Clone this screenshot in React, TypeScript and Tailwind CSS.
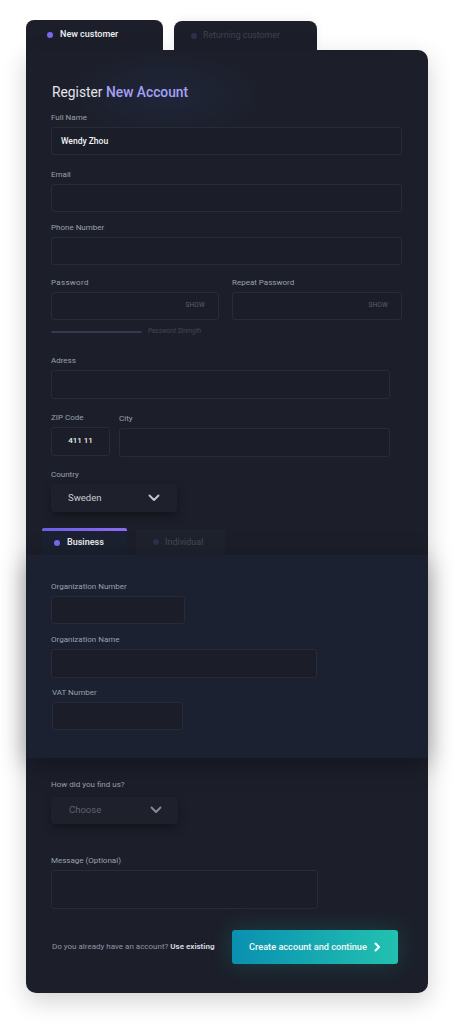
import React from "react";

const font = { fontFamily: "Roboto, 'Noto Sans', sans-serif" };

function Label({ children, className = "" }: { children: React.ReactNode; className?: string }) {
  return <div className={`h-[10px] leading-[10px] text-[8px] text-[#9aa0ad] mb-[4px] ${className}`}>{children}</div>;
}

function Input({ className = "", children }: { className?: string; children?: React.ReactNode }) {
  return (
    <div className={`h-[28px] rounded-[3px] border border-[#282c38] bg-[#1b1e28] flex items-center ${className}`}>
      {children}
    </div>
  );
}

function Chevron({ color }: { color: string }) {
  return (
    <svg width="12" height="8" viewBox="0 0 12 8" fill="none">
      <polyline points="1.5,1.5 6,6 10.5,1.5" stroke={color} strokeWidth="1.8" strokeLinecap="round" strokeLinejoin="round" />
    </svg>
  );
}

export default function App() {
  return (
    <div className="min-h-screen w-[454px] bg-white pt-[20px] pl-[26px]" style={font}>
      {/* top tabs */}
      <div className="flex items-end">
        <div className="w-[137px] h-[30px] rounded-t-[8px] bg-[#1c1f2a] flex items-center pl-[21px]">
          <span className="w-[6px] h-[6px] rounded-full bg-[#7b68ee] mr-[7px]" />
          <span className="text-[9px] font-medium text-[#f0f1f4]">New customer</span>
        </div>
        <div className="ml-[11px] w-[143px] h-[29px] rounded-t-[8px] bg-[#1c1f2a] flex items-center pl-[17px] shadow-[0_-2px_8px_rgba(0,0,0,0.06)]">
          <span className="w-[6px] h-[6px] rounded-full bg-[#342e4f] mr-[6px]" />
          <span className="text-[8.8px] text-[#3e4253]">Returning customer</span>
        </div>
      </div>

      {/* card */}
      <div className="relative w-[402px] rounded-b-[10px] rounded-tr-[10px] bg-[#1c1f2a] shadow-[0_8px_24px_rgba(0,0,0,0.18)]">
        <div className="absolute left-[40px] top-[0px] w-[200px] h-[90px] rounded-full bg-[radial-gradient(closest-side,rgba(40,55,100,0.28),rgba(40,55,100,0))] pointer-events-none" />
        <div className="relative px-[25px] pt-[33px]">
          <div className="h-[18px] leading-[18px] text-[13.8px] text-[#e3e5ea] pl-[1px]">
            Register <span className="font-medium text-[#a4a1f7]">New Account</span>
          </div>

          <div className="mt-[12px]">
            <Label>Full Name</Label>
            <Input className="w-[351px] pl-[9px]">
              <span className="text-[8.5px] font-medium text-[#f2f3f5]">Wendy Zhou</span>
            </Input>
          </div>

          <div className="mt-[15px]">
            <Label>Email</Label>
            <Input className="w-[351px]" />
          </div>

          <div className="mt-[11px]">
            <Label>Phone Number</Label>
            <Input className="w-[351px]" />
          </div>

          <div className="mt-[13px] flex gap-[13px]">
            <div>
              <Label className="tracking-[0.3px]">Password</Label>
              <Input className="w-[168px] justify-end pr-[13px]">
                <span className="text-[6.5px] text-[#5b606e] tracking-[0.2px]">SHOW</span>
              </Input>
              <div className="mt-[7px] flex items-center">
                <div className="w-[91px] h-[2px] rounded-full bg-[#3a3458]" />
                <span className="ml-[6px] text-[6.5px] italic text-[#434758]">Password Strength</span>
              </div>
            </div>
            <div>
              <Label>Repeat Password</Label>
              <Input className="w-[170px] justify-end pr-[13px]">
                <span className="text-[6.5px] text-[#5b606e] tracking-[0.2px]">SHOW</span>
              </Input>
            </div>
          </div>

          <div className="mt-[19px]">
            <Label>Adress</Label>
            <Input className="w-[339px] h-[29px]" />
          </div>

          <div className="mt-[14px] flex gap-[9px]">
            <div>
              <Label>ZIP Code</Label>
              <Input className="w-[59px] h-[29px] justify-center">
                <span className="text-[8px] font-medium text-[#eef0f3]">411 11</span>
              </Input>
            </div>
            <div>
              <Label className="mt-[1px] mb-[3px]">City</Label>
              <Input className="w-[271px] h-[29px]" />
            </div>
          </div>

          <div className="mt-[13px]">
            <Label className="mb-[3px]">Country</Label>
            <div className="w-[126px] h-[28px] rounded-[4px] bg-[#1e212c] shadow-[0_4px_10px_rgba(0,0,0,0.35)] flex items-center justify-between pl-[17px] pr-[17px]">
              <span className="text-[9.5px] text-[#c9ccd4]">Sweden</span>
              <Chevron color="#c6c9d1" />
            </div>
          </div>
        </div>

        {/* business tabs */}
        <div className="relative mt-[16px] pl-[16px] flex items-end">
          <div className="w-[85px] h-[27px] bg-[#1b2130] flex flex-col">
            <div className="h-[3px] rounded-t-[2px] bg-gradient-to-r from-[#6a5fe6] to-[#8b6cf0]" />
            <div className="flex-1 flex items-center pl-[12px]">
              <span className="w-[6px] h-[6px] rounded-full bg-[#7b68ee] mr-[7px]" />
              <span className="text-[9px] font-semibold text-[#e8eaee]">Business</span>
            </div>
          </div>
          <div className="ml-[9px] w-[89px] h-[25px] bg-[#1e222d] flex items-center pl-[17px]">
            <span className="w-[6px] h-[6px] rounded-full bg-[#332e4c] mr-[6px]" />
            <span className="text-[9px] text-[#454a5a]">Individual</span>
          </div>
        </div>

        {/* business panel */}
        <div className="relative h-[203px] bg-[#1b2130] shadow-[0_6px_24px_rgba(0,0,0,0.35)] pl-[25px] pt-[27px]">
          <Label>Organization Number</Label>
          <Input className="w-[134px] border-[#2a3140] bg-[#1a202d]" />
          <div className="mt-[11px]">
            <Label>Organization Name</Label>
            <Input className="w-[266px] h-[29px] border-[#2a3140] bg-[#1a202d]" />
          </div>
          <div className="mt-[10px] pl-[1px]">
            <Label>VAT Number</Label>
            <Input className="w-[131px] border-[#2a3140] bg-[#1a202d]" />
          </div>
        </div>

        <div className="px-[25px] pt-[22px] pb-[29px]">
          <Label className="mb-[7px]">How did you find us?</Label>
          <div className="w-[127px] h-[27px] rounded-[4px] bg-[#1e212c] shadow-[0_4px_10px_rgba(0,0,0,0.35)] flex items-center justify-between pl-[18px] pr-[16px]">
            <span className="text-[9.5px] text-[#5d6272]">Choose</span>
            <Chevron color="#8a8e99" />
          </div>

          <div className="mt-[32px]">
            <Label>Message (Optional)</Label>
            <Input className="w-[267px] h-[39px]" />
          </div>

          <div className="mt-[21px] flex items-center pr-[5px]">
            <span className="pl-[1px] text-[8px] text-[#9096a3]">
              Do you already have an account? <span className="font-bold text-[#d3d6dc]">Use existing</span>
            </span>
            <div className="ml-auto w-[166px] h-[34px] rounded-[3px] bg-gradient-to-r from-[#0a90b0] to-[#23c1b0] shadow-[0_0_22px_rgba(34,190,176,0.22)] flex items-center justify-center gap-[7px]">
              <span className="text-[9.2px] font-medium text-[#f4fbfb]">Create account and continue</span>
              <svg width="7" height="10" viewBox="0 0 7 10" fill="none">
                <polyline points="1.5,1.5 5,5 1.5,8.5" stroke="#ffffff" strokeWidth="2" strokeLinecap="round" strokeLinejoin="round" />
              </svg>
            </div>
          </div>
        </div>
      </div>
    </div>
  );
}
